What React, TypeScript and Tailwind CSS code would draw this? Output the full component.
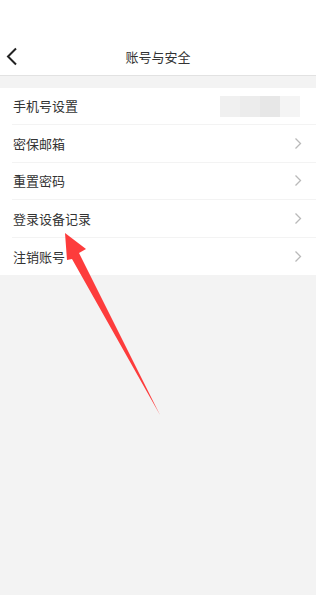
import React from "react";

const rows = ["手机号设置", "密保邮箱", "重置密码", "登录设备记录", "注销账号"];

function Chevron() {
  return (
    <svg width="8" height="13" viewBox="0 0 8 13" className="shrink-0">
      <path d="M1.5 1.5 L6.5 6.5 L1.5 11.5" fill="none" stroke="#b9b9b9" strokeWidth="1.3" />
    </svg>
  );
}

export default function App() {
  return (
    <div
      className="relative w-[316px] h-[595px] bg-[#f3f3f3] overflow-hidden"
      style={{ fontFamily: '"Noto Sans CJK SC", "Noto Sans", sans-serif' }}
    >
      <div className="bg-white h-[76px] border-b border-[#e2e2e2] flex items-end">
        <div className="relative flex items-center justify-center w-full h-[36px] mb-[1px]">
          <svg width="14" height="20" viewBox="0 0 14 20" className="absolute left-[5px] top-[9px]">
            <path d="M11 1.5 L3 9.5 L11 17.5" fill="none" stroke="#222" strokeWidth="2" />
          </svg>
          <span className="text-[13px] text-[#333] leading-none">账号与安全</span>
        </div>
      </div>
      <div className="h-[12px]" />
      <div className="bg-white">
        {rows.map((r, i) => (
          <div key={r} className="pl-[12px]">
            <div
              className={`flex items-center justify-between h-[37.4px] pr-[14px] pl-[1px] ${
                i < rows.length - 1 ? "border-b border-[#f3f3f3]" : ""
              }`}
            >
              <span className="text-[13px] text-[#333]">{r}</span>
              {i === 0 ? (
                <div className="flex h-[21px] w-[80px] mr-[2px]">
                  <div className="flex-1 bg-[#f0f0f0]" />
                  <div className="flex-1 bg-[#ececec]" />
                  <div className="flex-1 bg-[#e7e7e7]" />
                  <div className="flex-1 bg-[#f4f4f4]" />
                </div>
              ) : (
                <Chevron />
              )}
            </div>
          </div>
        ))}
      </div>
      <svg className="absolute left-0 top-0 pointer-events-none" width="316" height="595" viewBox="0 0 316 595">
        <polygon
          points="65,233 86,249 79,253 160,415 72,259 67,260"
          fill="#fd3c3c"
        />
      </svg>
    </div>
  );
}
